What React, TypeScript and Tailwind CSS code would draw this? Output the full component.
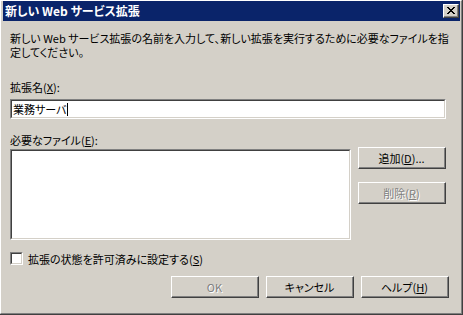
import React from 'react';

// classic raised bevel
function Button({ label, disabled, className }: { label: React.ReactNode; disabled?: boolean; className?: string }) {
    return (
        <div className={"w-[88px] h-[22px] border-t border-l border-r border-b border-t-white border-l-white border-r-[#404040] border-b-[#404040] " + (className ?? "")}>
            <div className={"w-full h-full flex items-center justify-center border-r border-b border-r-[#808080] border-b-[#808080] " + (disabled ? "text-[#808080] [text-shadow:1px_1px_0_#ffffff]" : "text-black")}>
                {label}
            </div>
        </div>
    );
}

function Sunken({ className, children }: { className?: string; children?: React.ReactNode }) {
    return (
        <div className={"border-t border-l border-r border-b border-t-[#808080] border-l-[#808080] border-r-white border-b-white " + (className ?? "")}>
            <div className="w-full h-full bg-white border-t border-l border-r border-b border-t-[#404040] border-l-[#404040] border-r-[#d4d0c8] border-b-[#d4d0c8]">
                {children}
            </div>
        </div>
    );
}

export default function App() {
    return (
        <div className="w-[463px] h-[315px] bg-[#d4d0c8] border-r border-b border-r-[#404040] border-b-[#404040] font-['Noto_Sans_CJK_JP',sans-serif] [font-feature-settings:'palt'] text-[11px] leading-[14px] text-black">
            <div className="w-full h-full flex flex-col pl-[1px] pr-[1px] pb-[1px] border-l border-t border-r border-b border-l-white border-t-white border-r-[#808080] border-b-[#808080]">
                {/* title bar */}
                <div className="h-[20px] ml-[1px] bg-[#0a246a] flex items-center justify-between pl-[2px] pr-[1px]">
                    <span className="text-white font-bold text-[12px] leading-[14px]">新しい Web サービス拡張</span>
                    <div className="w-[16px] h-[14px] border-t border-l border-r border-b border-t-white border-l-white border-r-[#404040] border-b-[#404040] bg-[#d4d0c8]">
                        <div className="w-full h-full flex items-center justify-center border-r border-b border-r-[#808080] border-b-[#808080]">
                            <svg width="8" height="7" viewBox="0 0 8 7" shapeRendering="crispEdges">
                                <path d="M0 0h2v1h-2zM6 0h2v1h-2zM1 1h2v1h-2zM5 1h2v1h-2zM2 2h4v1h-4zM3 3h2v1h-2zM2 4h4v1h-4zM1 5h2v1h-2zM5 5h2v1h-2zM0 6h2v1h-2zM6 6h2v1h-2z" fill="#000" />
                            </svg>
                        </div>
                    </div>
                </div>

                <div className="flex flex-col pl-[8px] pr-[11px]">
                    <p className="mt-[10px]">
                        新しい Web サービス拡張の名前を入力して、新しい拡張を実行するために必要なファイルを指<br />定してください。
                    </p>

                    <p className="mt-[21px]">拡張名(<span className="underline">X</span>):</p>
                    <Sunken className="mt-[5px] w-[436px] h-[20px]">
                        <div className="h-full flex items-center pl-[1px]">
                            <span>業務サーバ</span>
                            <span className="w-px h-[13px] bg-black"></span>
                        </div>
                    </Sunken>

                    <p className="mt-[14px]">必要なファイル(<span className="underline">E</span>):</p>
                    <div className="flex gap-[7px]">
                        <Sunken className="mt-[2px] w-[341px] h-[91px]" />
                        <div className="flex flex-col gap-[13px]">
                            <Button label={<span>追加(<span className="underline">D</span>)...</span>} />
                            <Button disabled label={<span>削除(<span className="underline">R</span>)</span>} />
                        </div>
                    </div>

                    <div className="mt-[11px] flex items-center gap-[5px] h-[15px]">
                        <Sunken className="w-[13px] h-[13px]" />
                        <span>拡張の状態を許可済みに設定する(<span className="underline">S</span>)</span>
                    </div>

                    <div className="mt-[10px] flex justify-end gap-[7px]">
                        <Button disabled label="OK" />
                        <Button label="キャンセル" />
                        <Button label={<span>ヘルプ(<span className="underline">H</span>)</span>} />
                    </div>
                </div>
            </div>
        </div>
    );
}
